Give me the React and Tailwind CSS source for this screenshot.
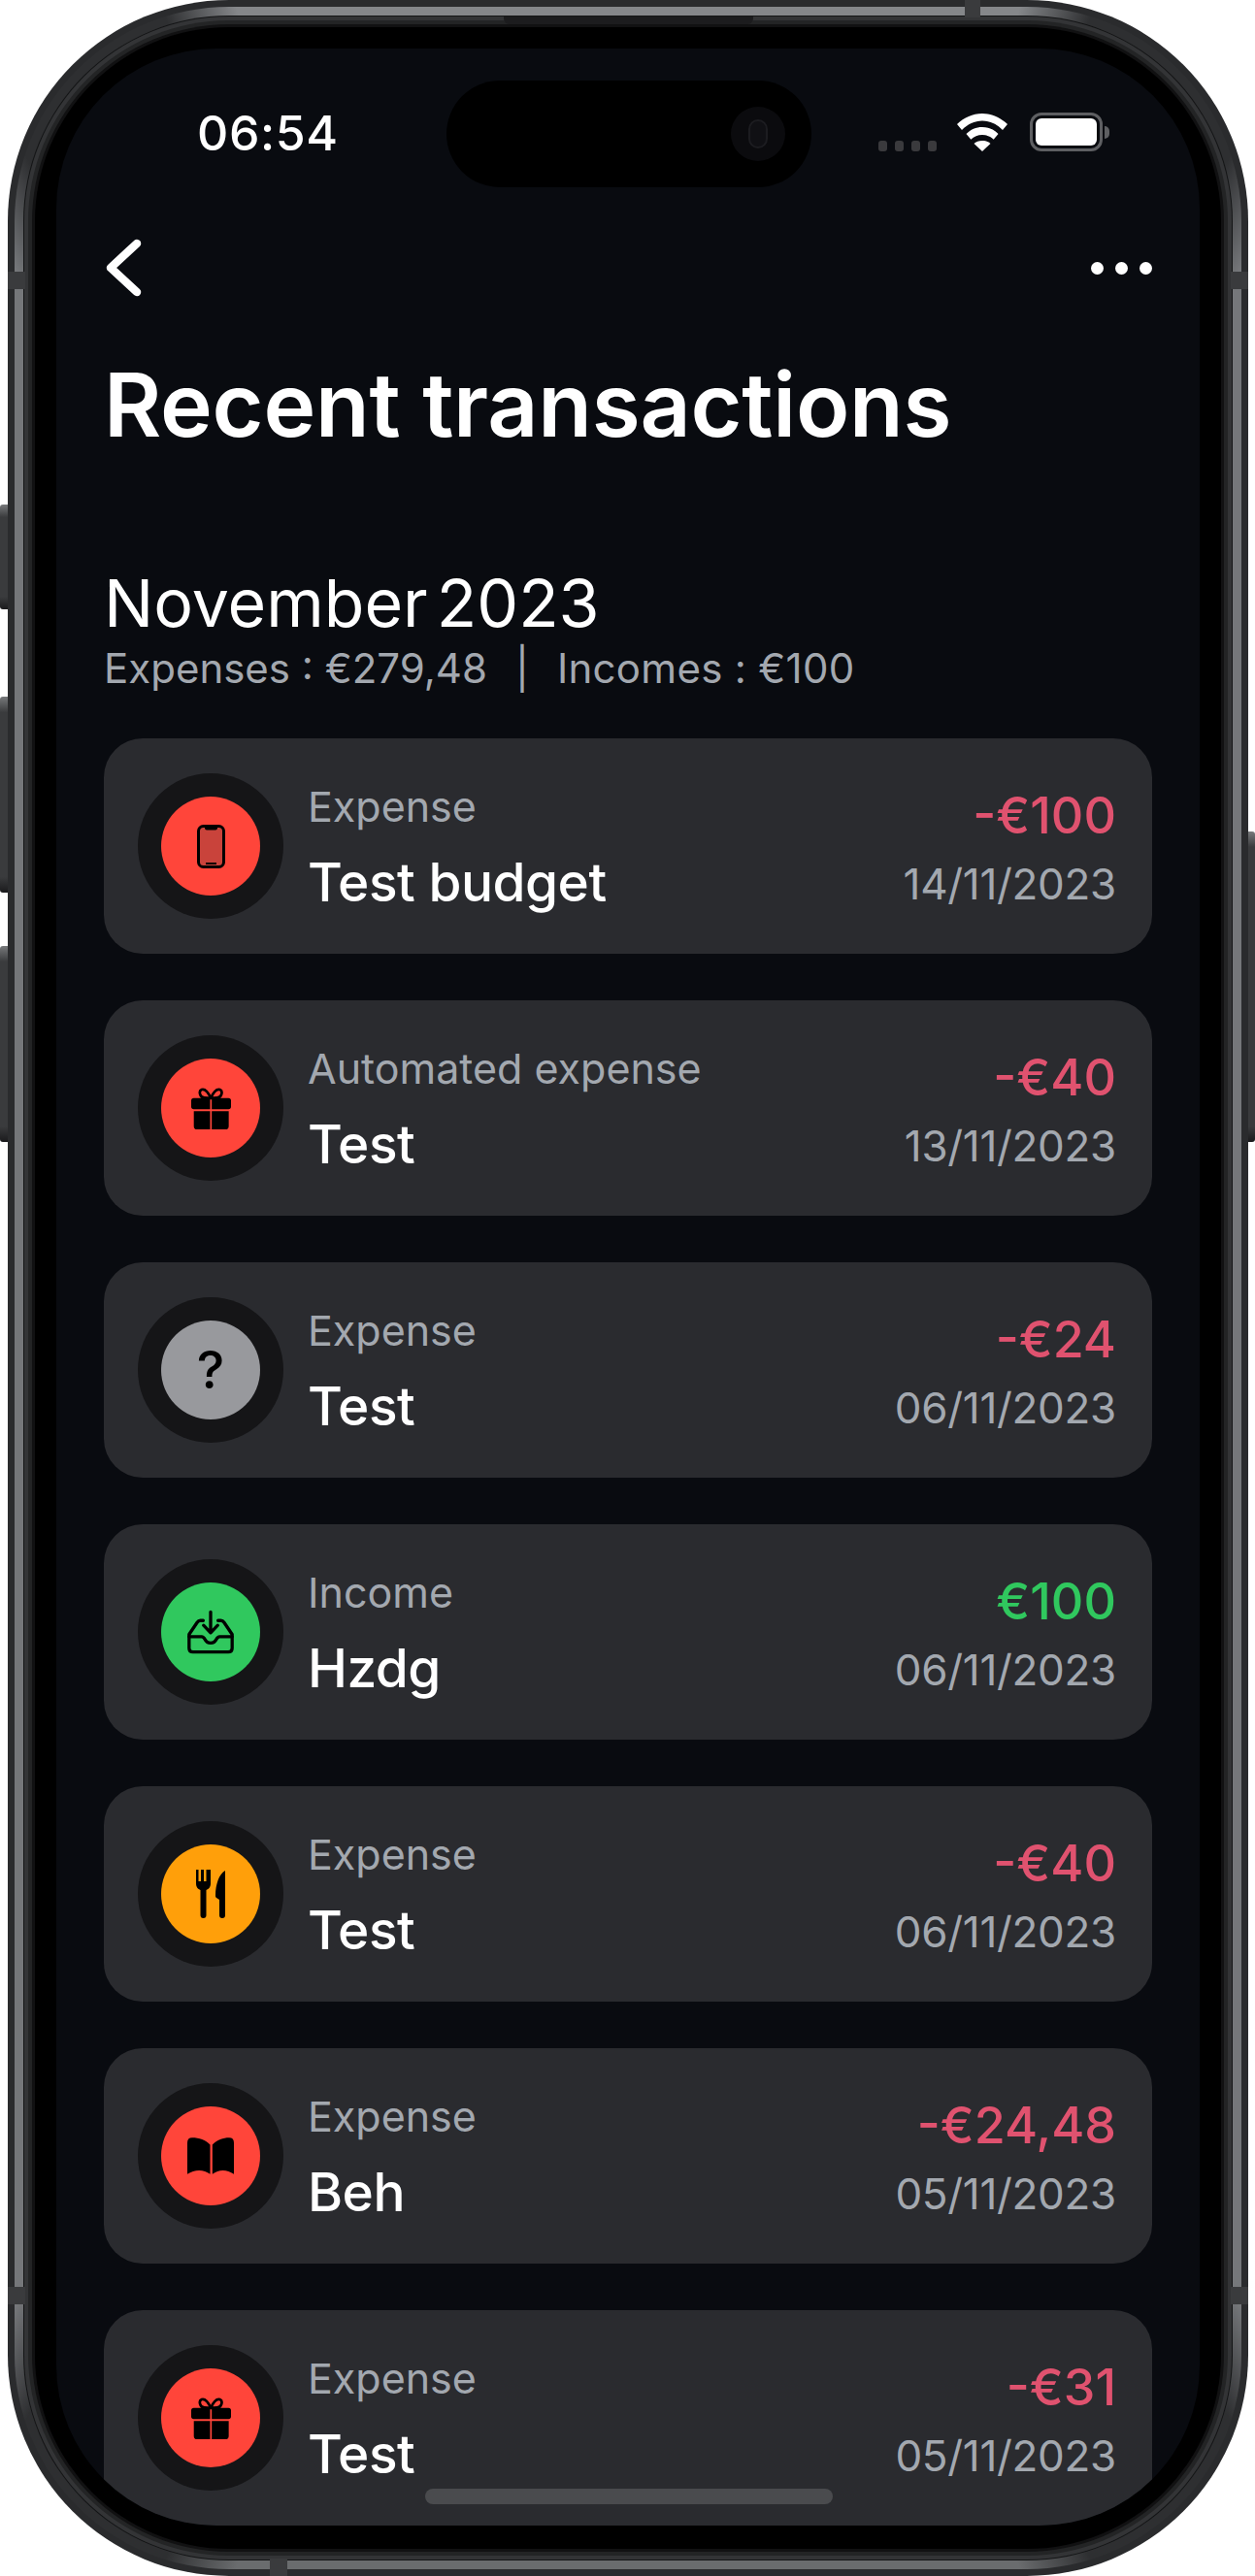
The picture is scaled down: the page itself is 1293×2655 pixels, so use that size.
const font = "font-['Inter',sans-serif]";

const transactions = [
  { kind: "Expense", name: "Test budget", amount: "-€100", date: "14/11/2023", icon: "phone", color: "bg-[#ff453a]" },
  { kind: "Automated expense", name: "Test", amount: "-€40", date: "13/11/2023", icon: "gift", color: "bg-[#ff453a]" },
  { kind: "Expense", name: "Test", amount: "-€24", date: "06/11/2023", icon: "question", color: "bg-[#98999d]" },
  { kind: "Income", name: "Hzdg", amount: "€100", date: "06/11/2023", icon: "inbox", color: "bg-[#30c85e]", income: true },
  { kind: "Expense", name: "Test", amount: "-€40", date: "06/11/2023", icon: "food", color: "bg-[#ff9f0a]" },
  { kind: "Expense", name: "Beh", amount: "-€24,48", date: "05/11/2023", icon: "book", color: "bg-[#ff453a]" },
  { kind: "Expense", name: "Test", amount: "-€31", date: "05/11/2023", icon: "gift", color: "bg-[#ff453a]" },
];

function CategoryIcon({ icon }) {
  if (icon === "phone") {
    return (
      <svg width="29" height="45" viewBox="0 0 29 45">
        <rect x="1.5" y="1.5" width="26" height="42" rx="5" fill="#c9433b" stroke="#000" strokeWidth="3" />
        <path d="M8 2h13v1.500a2 2 0 0 1-2 2h-9a2 2 0 0 1-2-2z" fill="#000" />
        <rect x="9" y="39" width="11" height="2" fill="#000" />
      </svg>
    );
  }
  if (icon === "gift") {
    return (
      <svg width="41" height="43" viewBox="60 60 122 128">
        <path d="M120 92C112 74 102 63 92 66C82 70 86 90 100 91ZM120 92C128 74 138 63 148 66C158 70 154 90 140 91Z" fill="none" stroke="#000" strokeWidth="8" />
        <path d="M68 92H118V126H68Q60 126 60 118V100Q60 92 68 92ZM123 92H174Q182 92 182 100V118Q182 126 174 126H123ZM68 132H118V188H78Q68 188 68 178ZM123 132H175V178Q175 188 165 188H123Z" fill="#000" />
      </svg>
    );
  }
  if (icon === "question") {
    return <span className="text-[54px] leading-none font-medium text-black">?</span>;
  }
  if (icon === "inbox") {
    return (
      <svg width="50" height="48" viewBox="45 55 150 145" fill="none" stroke="#000" strokeWidth="10" strokeLinecap="round" strokeLinejoin="round">
        <path d="M120 65V130M98 107L120 130L142 107" />
        <path d="M97 92H88Q82 92 78 98L53 135V178Q53 190 65 190H175Q187 190 187 178V135L162 98Q158 92 152 92H143" />
        <path d="M53 142H92Q98 142 102 150Q108 162 120 162Q132 162 138 150Q142 142 148 142H187" />
      </svg>
    );
  }
  if (icon === "food") {
    return (
      <svg width="30" height="50" viewBox="0 0 30 50">
        <path d="M0 0h2.500v12h2.500V0h3v12h2.500V0H15v14c0 4-2 6-4.500 7v26a3 3 0 0 1-6 0V21C2 20 0 18 0 14z" fill="#000" />
        <path d="M30 1v46a3 3 0 0 1-6 0V31l-3-2c-1-.5-1-1.500-1-2.500C20 15 24 4 30 1z" fill="#000" />
      </svg>
    );
  }
  if (icon === "book") {
    return (
      <svg width="48" height="38" viewBox="47 68 145 114">
        <path d="M118 90C104 74 84 68 62 68Q47 68 47 84V182C70 166 98 166 118 182Z" fill="#000" />
        <path d="M125 90C139 74 159 68 177 68Q192 68 192 84V182C170 166 145 166 125 182Z" fill="#000" />
      </svg>
    );
  }
  return null;
}

function TransactionCard({ t }) {
  return (
    <div className="flex h-[222px] shrink-0 items-center justify-between rounded-[40px] bg-[#2a2b2f] pr-[37px] pl-[35px]">
      <div className="flex items-center gap-[25px]">
        <div className="flex h-[150px] w-[150px] items-center justify-center rounded-full bg-[#151517]">
          <div className={`flex h-[102px] w-[102px] items-center justify-center rounded-full ${t.color}`}>
            <CategoryIcon icon={t.icon} />
          </div>
        </div>
        <div className="flex flex-col">
          <span className="text-[43px] leading-[52px] text-[#a3a8af]">{t.kind}</span>
          <span className="mt-[22px] text-[55px] leading-[60px] font-medium tracking-[-0.5px] text-white">{t.name}</span>
        </div>
      </div>
      <div className="mt-[6px] flex flex-col items-end">
        <span className={`text-[52px] leading-[56px] font-medium ${t.income ? "text-[#30c85e]" : "text-[#e0526f]"}`}>{t.amount}</span>
        <span className="mt-[15px] text-[44px] leading-[54px] tracking-[-0.3px] text-[#a3a8af]">{t.date}</span>
      </div>
    </div>
  );
}

export default function App() {
  return (
    <div className={`${font} flex h-[2655px] w-[1293px] overflow-hidden bg-white pl-[8px]`}>
      <div className="relative h-[2655px] w-[1278px]">
        {/* side buttons */}
        <div className="absolute top-[520px] -left-[8px] h-[108px] w-[10px] rounded-l-[3px] bg-[linear-gradient(180deg,#77797b_0%,#3a3b3d_12%,#3a3b3d_88%,#1a1a1c_100%)]" />
        <div className="absolute top-[718px] -left-[8px] h-[202px] w-[10px] rounded-l-[3px] bg-[linear-gradient(180deg,#77797b_0%,#3a3b3d_8%,#3a3b3d_92%,#1a1a1c_100%)]" />
        <div className="absolute top-[975px] -left-[8px] h-[202px] w-[10px] rounded-l-[3px] bg-[linear-gradient(180deg,#77797b_0%,#3a3b3d_8%,#3a3b3d_92%,#1a1a1c_100%)]" />
        <div className="absolute top-[857px] -right-[7px] h-[320px] w-[9px] rounded-r-[3px] bg-[linear-gradient(180deg,#77797b_0%,#3a3b3d_5%,#3a3b3d_95%,#1a1a1c_100%)]" />

        {/* phone body: dark rim, metal band, hairline, inner bevel, bezel */}
        <div className="relative h-full rounded-[228px] bg-[#2a2b2d] p-[7px]">
          <div className="h-full rounded-[221px] bg-[conic-gradient(#85878a_0deg,#85878a_17deg,#2e2f31_20deg,#2e2f31_28deg,#75777a_31deg,#75777a_149deg,#2e2f31_152deg,#2e2f31_160deg,#6a6c6e_163deg,#6a6c6e_197deg,#2e2f31_200deg,#2e2f31_208deg,#75777a_211deg,#75777a_329deg,#2e2f31_332deg,#2e2f31_340deg,#85878a_343deg)] p-[9px]">
            <div className="h-full rounded-[212px] bg-[#141516] p-[1px]">
              <div className="h-full rounded-[211px] bg-[#333436] p-[4px]">
                <div className="h-full rounded-[207px] bg-[#232425] p-[4px]">
                  <div className="h-full rounded-[203px] bg-[#111112] p-[3px]">
                    <div className="h-full rounded-[200px] bg-[#000000] pt-[22px] pr-[22px] pb-[24px] pl-[22px]">
                      {/* screen */}
                      <div className="relative flex h-[2553px] flex-col overflow-hidden rounded-[165px] bg-[#090b10] px-[49px]">
                        {/* status bar */}
                        <div className="flex h-[120px] shrink-0 items-end justify-between">
                          <span className="mb-[10px] ml-[96px] text-[50px] leading-[46px] font-medium tracking-[0.6px] text-white">06:54</span>
                          <div className="mr-[44px] mb-[14px] flex items-center">
                            <div className="mt-[28px] flex gap-[8px]">
                              <i className="h-[11px] w-[9px] rounded-[3px] bg-[#3a3a3d]" />
                              <i className="h-[11px] w-[9px] rounded-[3px] bg-[#3a3a3d]" />
                              <i className="h-[11px] w-[9px] rounded-[3px] bg-[#3a3a3d]" />
                              <i className="h-[11px] w-[9px] rounded-[3px] bg-[#3a3a3d]" />
                            </div>
                            <svg className="ml-[21px]" width="52" height="39" viewBox="0 0 52 39">
                              <path d="M26 0C16 0 7.500 4 0 11l5 6C11 11 18 7.500 26 7.500S41 11 47 17l5-6C44.500 4 36 0 26 0z" fill="#fff" />
                              <path d="M26 14c-6.500 0-12 2.500-16.500 7l4.800 5.800C17.500 23.500 21.500 22 26 22s8.500 1.500 11.700 4.800L42.500 21C38 16.500 32.500 14 26 14z" fill="#fff" />
                              <path d="M26 28c-3.500 0-6.500 1.200-8.500 3L26 39l8.500-8C32.500 29.200 29.500 28 26 28z" fill="#fff" />
                            </svg>
                            <div className="ml-[23px] flex items-center">
                              <div className="h-[40px] w-[75px] rounded-[12px] border-[3px] border-[#5e5f62] p-[3px]">
                                <div className="h-full rounded-[6px] bg-white" />
                              </div>
                              <div className="ml-[2px] h-[13px] w-[5px] rounded-r-full bg-[#5e5f62]" />
                            </div>
                          </div>
                        </div>

                        {/* nav */}
                        <div className="mt-[76px] flex h-[60px] shrink-0 items-center justify-between">
                          <svg className="ml-[2px]" width="37" height="60" viewBox="0 0 37 60" fill="none" stroke="#fff" strokeWidth="8.500" strokeLinecap="round" strokeLinejoin="round">
                            <path d="M32 5L5 30L32 55" />
                          </svg>
                          <div className="flex gap-[12px]">
                            <i className="h-[13px] w-[13px] rounded-full bg-white" />
                            <i className="h-[13px] w-[13px] rounded-full bg-white" />
                            <i className="h-[13px] w-[13px] rounded-full bg-white" />
                          </div>
                        </div>

                        <h1 className="mt-[61px] shrink-0 text-[91px] leading-[100px] font-semibold tracking-[-0.2px] text-white">Recent transactions</h1>

                        <div className="mt-[116px] shrink-0 text-[68px] leading-[76px] font-normal [word-spacing:-10px] text-white">November 2023</div>
                        <div className="mt-[5px] flex shrink-0 text-[42px] leading-[50px] text-[#a3a8af]">
                          <span>Expenses : €279,48</span>
                          <span className="mx-[29px]">|</span>
                          <span className="tracking-[0.3px]">Incomes : €100</span>
                        </div>

                        <div className="mt-[47px] flex shrink-0 flex-col gap-[48px]">
                          {transactions.map((t, i) => (
                            <TransactionCard key={i} t={t} />
                          ))}
                        </div>

                        {/* dynamic island */}
                        <div className="absolute top-[33px] left-[402px] flex h-[110px] w-[376px] items-center justify-end rounded-full bg-black pr-[27px]">
                          <div className="flex h-[56px] w-[56px] items-center justify-center rounded-full bg-[#0b0b0e]">
                            <div className="h-[30px] w-[20px] rounded-full border-[2px] border-[#1c1c20] bg-[#101014]" />
                          </div>
                        </div>

                        {/* home indicator */}
                        <div className="absolute bottom-[22px] left-[380px] h-[16px] w-[420px] rounded-full bg-[#4a4b4e]" />
                      </div>
                    </div>
                  </div>
                </div>
              </div>
            </div>
          </div>
          {/* antenna bands and speaker */}
          <div className="absolute top-[280px] left-0 h-[18px] w-[18px] bg-[#3a3b3d]" />
          <div className="absolute top-[280px] right-0 h-[18px] w-[18px] bg-[#3a3b3d]" />
          <div className="absolute bottom-[280px] left-0 h-[18px] w-[18px] bg-[#3a3b3d]" />
          <div className="absolute right-0 bottom-[280px] h-[18px] w-[18px] bg-[#3a3b3d]" />
          <div className="absolute top-0 right-[276px] h-[18px] w-[16px] bg-[#3a3b3d]" />
          <div className="absolute bottom-0 left-[270px] h-[18px] w-[18px] bg-[#3a3b3d]" />
          <div className="absolute top-[17px] left-[511px] h-[8px] w-[257px] rounded-b-[6px] bg-[#1c1c1e]" />
        </div>
      </div>
    </div>
  );
}
